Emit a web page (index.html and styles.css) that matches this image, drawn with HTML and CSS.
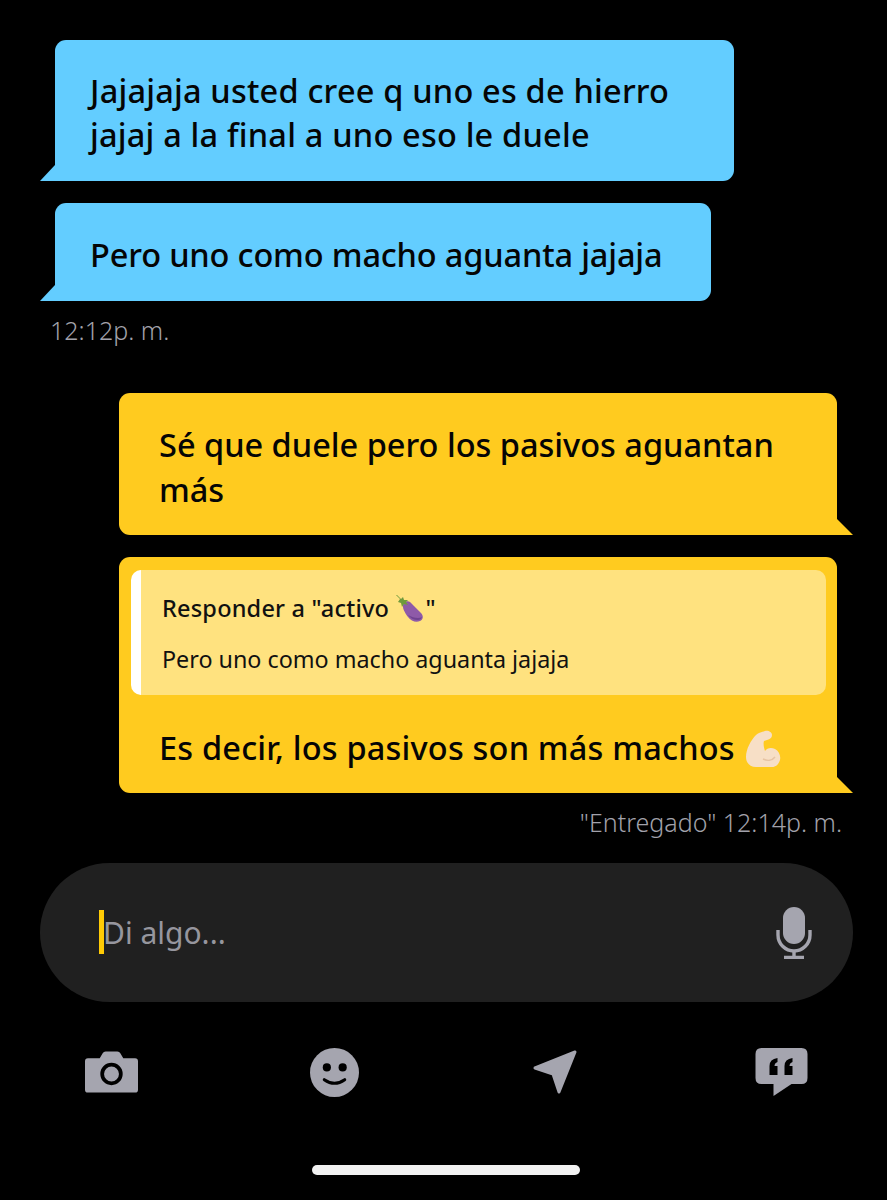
FILE: index.html
```html
<!DOCTYPE html>
<html lang="es">
<head>
<meta charset="utf-8">
<title>Chat</title>
<link rel="stylesheet" href="styles.css">
</head>
<body>
<main class="screen">
  <section class="thread">
    <div class="bubble in w1"><p class="msg">Jajajaja usted cree q uno es de hierro<br>jajaj a la final a uno eso le duele</p></div>
    <div class="bubble in w2"><p class="msg">Pero uno como macho aguanta jajaja</p></div>
    <div class="time time-in">12:12p. m.</div>

    <div class="bubble out w3"><p class="msg">Sé que duele pero los pasivos aguantan<br>más</p></div>
    <div class="bubble out w3 with-reply">
      <div class="reply">
        <div class="reply-title">Responder a "activo
          <svg class="emoji egg" viewBox="0 0 30 30"><path d="M9 9c3-3 6-2 8 1l9 9c3 3 2 7-1 8-4 2-9 0-12-4S6 13 9 9z" fill="#8e5aa8"/><path d="M13 21c2 3 6 5 10 5 2 0 3-1 4-3-3 2-9 1-14-2z" fill="#6f4390"/><path d="M2 1l4 4 2-2 1 3 4 0-2 2 2 3-4-1-2 3-1-4-3-1 2-3-4-4z" fill="#6f9a3c"/></svg>"</div>
        <div class="reply-text">Pero uno como macho aguanta jajaja</div>
      </div>
      <p class="msg reply-msg">Es decir, los pasivos son más machos
        <svg class="emoji arm" viewBox="0 0 36 38"><path d="M20 1c3-1 7 1 7 4 0 3-2 4-5 5l-3 1c-1 3 0 7 1 10 2-3 6-4 10-2 4 2 6 7 5 11-1 3-3 7-8 7H11C5 37 1 33 1 27 1 19 6 10 11 5c2-2 6-3 9-4z" fill="#f7dfc6"/><path d="M18 29c4 2 9 2 12-2" fill="none" stroke="#e6c4a4" stroke-width="1.500"/></svg></p>
    </div>
    <div class="time time-out">"Entregado" 12:14p. m.</div>
  </section>

  <div class="input">
    <div class="field"><span class="caret"></span><span class="placeholder">Di algo...</span></div>
    <svg class="mic" viewBox="0 0 36 52">
      <rect x="7" y="0" width="22" height="37" rx="11" fill="#a5a5af"/>
      <path d="M2 23v5a16 16 0 0 0 32 0v-5" fill="none" stroke="#a5a5af" stroke-width="3.400"/>
      <path d="M18 44v6M8 50.500h20" fill="none" stroke="#a5a5af" stroke-width="3.400"/>
    </svg>
  </div>

  <nav class="tools">
    <svg class="tool cam" viewBox="0 0 54 42">
      <path fill="#a5a5af" d="M3 7h12l3-5q1-2 3-2h12q2 0 3 2l3 5h12q3 0 3 3v29q0 3-3 3H3q-3 0-3-3V10q0-3 3-3z"/>
      <circle cx="27" cy="23" r="9.500" fill="#a5a5af" stroke="#000" stroke-width="3.800"/>
    </svg>
    <svg class="tool smile" viewBox="0 0 48 48">
      <circle cx="24" cy="24" r="24" fill="#a5a5af"/>
      <circle cx="16.500" cy="19" r="4" fill="#000"/>
      <circle cx="32" cy="19" r="4" fill="#000"/>
      <path d="M14 31q10 7 20 0" fill="none" stroke="#000" stroke-width="3" stroke-linecap="round"/>
    </svg>
    <svg class="tool nav" viewBox="0 0 46 46">
      <path d="M2 19 42 3 26 43 20 25z" fill="#a5a5af" stroke="#a5a5af" stroke-width="3" stroke-linejoin="round"/>
    </svg>
    <svg class="tool quote" viewBox="0 0 52 48">
      <path fill="#a5a5af" d="M6 0h40q6 0 6 6v24q0 6-6 6H36L18 48V36H6q-6 0-6-6V6q0-6 6-6z"/>
      <path fill="#000" d="M14 27V18q0-7 8-8v4q-3 1-3 4h3v9zM29 27V18q0-7 8-8v4q-3 1-3 4h3v9z"/>
    </svg>
  </nav>
  <div class="home-row"><span class="home"></span></div>
</main>
</body>
</html>
```
FILE: styles.css
```css
* { box-sizing: border-box; }
html, body { margin: 0; background: #000; }
.screen {
  width: 887px;
  height: 1200px;
  padding-top: 40px;
  font-family: "Noto Sans", "Liberation Sans", sans-serif;
  overflow: hidden;
}
.thread { display: flex; flex-direction: column; }
.bubble { position: relative; border-radius: 11px; color: #050505; }
.bubble::after { content: ""; position: absolute; bottom: 0; width: 15px; height: 16px; background: inherit; }
.in { background: #63cdff; margin-left: 55px; border-bottom-left-radius: 0; margin-bottom: 22px; }
.in::after { left: -15px; clip-path: polygon(100% 0, 100% 100%, 0 100%); }
.out { background: #ffcb1f; margin-left: 119px; border-bottom-right-radius: 0; margin-bottom: 22px; }
.out::after { right: -16px; width: 16px; clip-path: polygon(0 0, 100% 100%, 0 100%); }
.w1 { width: 679px; height: 141px; padding: 29px 0 0 35px; }
.w1 .msg { letter-spacing: .2px; line-height: 44px; }
.w2 { width: 656px; height: 98px; padding: 29px 0 0 35px; margin-bottom: 12px; }
.w2 .msg { letter-spacing: -.15px; }
.w3 { width: 718px; }
.out:not(.with-reply) { height: 142px; padding: 29px 0 0 40px; }
.with-reply { height: 236px; padding: 13px 11px 0 12px; margin-bottom: 12px; }
.msg { margin: 0; font-size: 32.500px; line-height: 45px; font-weight: 500; white-space: nowrap; }
.time { font-size: 25px; line-height: 34px; color: #a2a2ab; font-weight: 300; }
.time-in { margin: 0 0 46px 50px; }
.time-out { align-self: flex-end; margin-right: 45px; }
.reply {
  height: 125px;
  background: #ffe27f;
  border-left: 10px solid #fff;
  border-radius: 10px;
  padding: 21px 0 0 21px;
  color: #111;
}
.reply-title { font-size: 23.500px; line-height: 34px; font-weight: 500; white-space: nowrap; letter-spacing: .2px; }
.reply-text { font-size: 23.300px; line-height: 34px; margin-top: 17px; white-space: nowrap; }
.reply-msg { margin: 30px 0 0 28px; letter-spacing: .2px; }
.emoji { display: inline-block; vertical-align: middle; }
.egg { width: 30px; height: 30px; margin-top: -3px; }
.arm { width: 36px; height: 38px; margin-top: -4px; margin-left: 2px; }
.input {
  margin: 24px 0 0 40px;
  width: 813px;
  height: 139px;
  background: #202020;
  border-radius: 70px;
  display: flex;
  align-items: center;
  justify-content: space-between;
  padding: 0 41px 0 59px;
}
.field { display: flex; align-items: center; position: relative; }
.caret { position: absolute; left: 0; top: -6px; width: 5px; height: 44px; background: #ffcb05; }
.placeholder { font-size: 30px; line-height: 34px; color: #96969e; margin-left: 4px; font-weight: 400; }
.mic { width: 36px; height: 52px; }
.tools {
  display: flex;
  align-items: center;
  margin: 45px 0 0 85px;
  height: 50px;
}
.cam { width: 53px; height: 42px; }
.smile { width: 49px; height: 49px; margin-left: 172px; }
.nav { width: 46px; height: 46px; margin-left: 174px; }
.quote { width: 53px; height: 48px; margin-left: 176px; }
.home-row { display: flex; justify-content: center; margin-top: 68px; padding-left: 5px; }
.home { width: 268px; height: 10px; border-radius: 5px; background: #f2f2f2; }
```
